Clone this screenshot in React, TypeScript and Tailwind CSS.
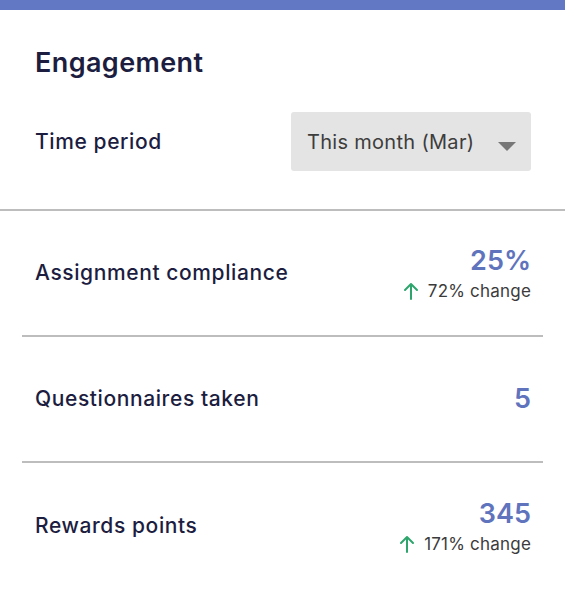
const font = { fontFamily: "Inter, 'Open Sans', sans-serif" };

type Metric = {
  label: string;
  value: string;
  change?: string;
};

const metrics: Metric[] = [
  { label: "Assignment compliance", value: "25%", change: "72% change" },
  { label: "Questionnaires taken", value: "5" },
  { label: "Rewards points", value: "345", change: "171% change" },
];

function ArrowUp() {
  return (
    <svg width="16" height="18" viewBox="0 0 16 18" fill="none">
      <path
        d="M8 17V2M2 8l6-6 6 6"
        stroke="#2ea56d"
        strokeWidth="2"
        strokeLinecap="round"
        strokeLinejoin="round"
      />
    </svg>
  );
}

function MetricRow({ m, last }: { m: Metric; last: boolean }) {
  return (
    <div
      className={`flex h-[126px] items-center justify-between pr-[12px] pl-[13px] ${
        last ? "" : "border-b-2 border-[#bdbdbd]"
      }`}
    >
      <span className="text-[21px] tracking-[0.6px] font-medium text-[#1c1d3f]">
        {m.label}
      </span>
      <div className="flex flex-col items-end">
        <span className="text-[27px] leading-[32px] font-semibold text-[#5f74bd]">
          {m.value}
        </span>
        {m.change && (
          <span className="mt-[3px] flex items-center gap-[9px] text-[17px] leading-[22px] tracking-[0.2px] text-[#3b3b3b]">
            <ArrowUp />
            {m.change}
          </span>
        )}
      </div>
    </div>
  );
}

export default function App() {
  return (
    <div className="min-h-[601px] w-[565px] bg-white" style={font}>
      <div className="h-[10px] bg-[#6278c4]" />
      <div className="border-b-2 border-[#bdbdbd] px-[35px] pt-[37px] pb-[38px]">
        <h2 className="text-[27px] leading-[32px] tracking-[0.4px] font-semibold text-[#1c1d3f]">
          Engagement
        </h2>
        <div className="mt-[33px] flex items-center justify-between">
          <span className="text-[21px] tracking-[0.6px] font-medium text-[#1c1d3f]">
            Time period
          </span>
          <button className="mr-[-1px] flex h-[59px] w-[240px] items-center justify-between rounded-[3px] bg-[#e4e4e4] pr-[14px] pl-[16px] text-[20px] tracking-[0.3px] text-[#3d3d3d]">
            <span>This month (Mar)</span>
            <svg width="20" height="10" viewBox="0 0 20 10" className="mt-[8px]">
              <path d="M1 1h18l-9 9z" fill="#777777" />
            </svg>
          </button>
        </div>
      </div>
      <div className="mx-[22px]">
        {metrics.map((m, i) => (
          <MetricRow key={m.label} m={m} last={i === metrics.length - 1} />
        ))}
      </div>
    </div>
  );
}
